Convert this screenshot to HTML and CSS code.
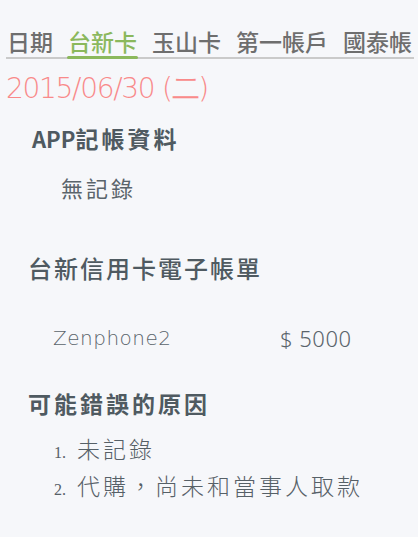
FILE: index.html
```html
<!DOCTYPE html>
<html lang="zh-Hant">
<head>
<meta charset="utf-8">
<link rel="stylesheet" href="styles.css">
</head>
<body>
<div class="page">
  <nav class="tabs">
    <span class="tab">日期</span>
    <span class="tab active">台新卡</span>
    <span class="tab">玉山卡</span>
    <span class="tab">第一帳戶</span>
    <span class="tab">國泰帳</span>
  </nav>
  <div class="date">2015/06/30 (二)</div>
  <h2 class="h-app"><span class="latin">APP</span>記帳資料</h2>
  <p class="norecord">無記錄</p>
  <h2 class="h-bill">台新信用卡電子帳單</h2>
  <div class="item">
    <span class="item-name">Zenphone2</span>
    <span class="item-amount">$ 5000</span>
  </div>
  <h2 class="h-reason">可能錯誤的原因</h2>
  <ol class="reasons">
    <li><span class="num">1.</span>未記錄</li>
    <li><span class="num">2.</span>代購，尚未和當事人取款</li>
  </ol>
</div>
</body>
</html>
```
FILE: styles.css
```css
html, body {
  margin: 0;
  padding: 0;
  background: #f6f7fa;
}
body {
  font-family: "Noto Sans CJK TC", "Noto Sans", sans-serif;
  color: #505a60;
  width: 418px;
  height: 537px;
  overflow: hidden;
}
.page {
  padding-top: 26px;
}
.tabs {
  display: flex;
  gap: 15px;
  margin: 0 4px 0 6px;
  border-bottom: 2px solid #cacaca;
  height: 31px;
  white-space: nowrap;
}
.tab {
  font-size: 23px;
  line-height: 31px;
  font-weight: 500;
  color: #6e6e6e;
  position: relative;
  flex: none;
}
.tab:first-child { padding-left: 1px; }
.tab.active {
  color: #8bb85c;
}
.tab.active::after {
  content: "";
  position: absolute;
  left: -1px;
  right: -1px;
  bottom: -2px;
  height: 3px;
  background: #8bb85c;
  border-radius: 2px;
}
.date {
  margin: 14px 0 0 6px;
  font-family: "DejaVu Sans", sans-serif;
  font-weight: 200;
  font-size: 28px;
  line-height: 32px;
  color: #f98a8a;
  letter-spacing: -1.3px;
}
h2 {
  margin: 0;
  line-height: 30px;
  font-weight: 700;
  color: #4f5a61;
}
.h-app {
  margin: 18px 0 0 32px;
  font-size: 23px;
  letter-spacing: 3px;
}
.h-app .latin {
  font-size: 22px;
  letter-spacing: 0;
}
.norecord {
  margin: 19px 0 0 61px;
  font-size: 22px;
  line-height: 30px;
  letter-spacing: 3px;
  color: #5a646b;
}
.h-bill {
  margin: 51px 0 0 28px;
  font-size: 24px;
  font-weight: 500;
  letter-spacing: 2px;
}
.item {
  display: flex;
  margin: 40px 0 0 53px;
  line-height: 30px;
  color: #5a646b;
}
.item-name {
  width: 227px;
  font-family: "DejaVu Sans", sans-serif;
  font-weight: 200;
  font-size: 20px;
  letter-spacing: 0.5px;
}
.item-amount {
  font-family: "Noto Sans", sans-serif;
  font-weight: 300;
  font-size: 22px;
  letter-spacing: 0.5px;
}
.h-reason {
  margin: 35px 0 0 28px;
  font-size: 23px;
  letter-spacing: 3px;
}
.reasons {
  list-style: none;
  margin: 14px 0 0 54px;
  padding: 0;
}
.reasons li {
  font-size: 23px;
  line-height: 33px;
  letter-spacing: 3px;
  color: #566067;
  font-weight: 300;
}
.num {
  display: inline-block;
  width: 23px;
  font-family: "Liberation Serif", serif;
  font-size: 16px;
  letter-spacing: 0;
}
```
